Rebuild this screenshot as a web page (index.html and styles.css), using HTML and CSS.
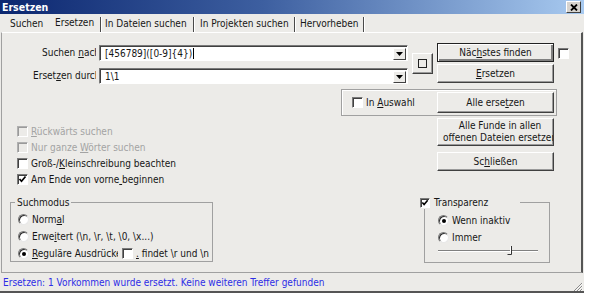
FILE: index.html
```html
<!DOCTYPE html>
<html lang="de">

<head>
    <meta charset="UTF-8">
    <meta name="viewport" content="width=device-width, initial-scale=1.0">
    <title>Ersetzen</title>
    <link rel="stylesheet" href="styles.css">
</head>

<body>
    <div class="window">
        <div class="titlebar">
            <span class="title">Ersetzen</span>
            <span class="close">
                <svg width="8" height="7" viewBox="0 0 8 7"><path d="M1 0.5L7 6.5M7 0.5L1 6.5" stroke="#000" stroke-width="1.8"/></svg>
            </span>
        </div>
        <div class="main">
            <div class="tabs">
                <span class="tab t1">Suchen</span>
                <span class="tab t2 active">Ersetzen</span>
                <span class="tab t3">In Dateien suchen</span>
                <span class="tab t4">In Projekten suchen</span>
                <span class="tab t5">Hervorheben</span>
            </div>
            <div class="pane">
                <!-- suchen / ersetzen felder -->
                <div class="row-a">
                    <div class="fields">
                        <div class="field">
                            <span class="lbl"><span class="clip find">Suchen <u>n</u>ach :</span></span>
                            <div class="combo">
                                <span class="val">[456789]([0-9]{4})</span><span class="caret"></span>
                                <span class="arr"><svg width="7" height="4" viewBox="0 0 7 4"><path d="M0 0H7L3.5 4Z" fill="#000"/></svg></span>
                            </div>
                        </div>
                        <div class="field">
                            <span class="lbl"><span class="clip repl">Erset<u>z</u>en durch :</span></span>
                            <div class="combo">
                                <span class="val">1\1</span>
                                <span class="arr"><svg width="7" height="4" viewBox="0 0 7 4"><path d="M0 0H7L3.5 4Z" fill="#000"/></svg></span>
                            </div>
                        </div>
                    </div>
                    <div class="sqbtn"><span class="sq"></span></div>
                    <div class="btncol">
                        <div class="btn default">Näc<u>h</u>stes finden</div>
                        <div class="btn"><u>E</u>rsetzen</div>
                    </div>
                    <span class="cb cb-top"></span>
                </div>

                <div class="selgroup">
                    <span class="cb"></span>
                    <span class="sel-lbl">In <u>A</u>uswahl</span>
                    <div class="btn">Alle erse<u>t</u>zen</div>
                </div>

                <div class="row-c">
                    <div class="checks">
                        <div class="opt dis"><span class="cb"></span><span><u>R</u>ückwärts suchen</span></div>
                        <div class="opt dis"><span class="cb"></span><span>Nur ganze <u>W</u>örter suchen</span></div>
                        <div class="opt"><span class="cb"></span><span>Groß-/<u>K</u>leinschreibung beachten</span></div>
                        <div class="opt"><span class="cb on"><svg width="9" height="9" viewBox="0 0 9 9"><path d="M1.5 4L3.5 6.3L7.5 1.5" fill="none" stroke="#000" stroke-width="1.7"/></svg></span><span>Am Ende von vorne<u> </u>beginnen</span></div>
                    </div>
                    <div class="btncol wide-gap">
                        <div class="btn tall">Alle Funde in allen<br>offenen Dateien ersetzen</div>
                        <div class="btn">Sc<u>h</u>ließen</div>
                    </div>
                </div>

                <div class="row-d">
                    <fieldset class="mode">
                        <legend>Suchmodus</legend>
                        <div class="opt"><span class="rd"></span><span>Norm<u>a</u>l</span></div>
                        <div class="opt"><span class="rd"></span><span>Erwe<u>i</u>tert (\n, \r, \t, \0, \x...)</span></div>
                        <div class="opt">
                            <span class="rd on"></span><span class="clip regex"><u>R</u>eguläre Ausdrücke</span>
                            <span class="cb"></span><span class="clip dot"><u>.</u> findet \r und \n</span>
                        </div>
                    </fieldset>
                    <fieldset class="transp">
                        <legend><span class="cb on"><svg width="8" height="8" viewBox="0 0 9 9"><path d="M1.5 4L3.5 6.3L7.5 1.5" fill="none" stroke="#000" stroke-width="1.8"/></svg></span><span>Transparenz</span></legend>
                        <div class="opt"><span class="rd on"></span><span>Wenn inaktiv</span></div>
                        <div class="opt"><span class="rd"></span><span>Immer</span></div>
                        <div class="slider">
                            <span class="track"></span>
                            <svg class="thumb" width="6" height="9" viewBox="0 0 6 9"><path d="M4.5 0V8.5H0.5" fill="none" stroke="#333" stroke-width="1"/><path d="M3.5 0.5V7.5" stroke="#fff" stroke-width="1"/></svg>
                        </div>
                    </fieldset>
                </div>
            </div>
            <div class="status">
                <span>Ersetzen: 1 Vorkommen wurde ersetzt. Keine weiteren Treffer gefunden</span>
                <svg class="grip" width="10" height="9" viewBox="0 0 10 9"><path d="M9 1L1 9M9 4L4 9M9 7L7 9" stroke="#8a8a8a" stroke-width="1"/><path d="M10 1L2 9M10 4L5 9M10 7L8 9" stroke="#fff" stroke-width="0.6"/></svg>
            </div>
        </div>
    </div>
</body>

</html>
```

FILE: styles.css
```css
* {
    box-sizing: border-box;
}

body {
    margin: 0;
    background-color: #fff;
    font-family: "DejaVu Sans Condensed", "Liberation Sans", sans-serif;
    font-stretch: condensed;
    font-size: 10px;
    color: #161616;
}

u {
    text-decoration-thickness: 1px;
    text-underline-offset: 1px;
}

.window {
    width: 584px;
}

.titlebar {
    display: flex;
    align-items: center;
    height: 14px;
    padding: 0 3px 0 2px;
    background: linear-gradient(to right, #0c2770, #3d5fa0 45%, #a8caf0);
}

.title {
    color: #fff;
    font-weight: bold;
    font-size: 10.5px;
}

.close {
    display: flex;
    align-items: center;
    justify-content: center;
    margin-left: auto;
    width: 15px;
    height: 12px;
    background-color: #d6d3ce;
    border: 1px solid;
    border-color: #fff #404040 #404040 #fff;
}

.main {
    width: 584px;
    background-color: #ecebe8;
    border-bottom: 2px solid #555;
}

/* reiter */
.tabs {
    display: flex;
    height: 18px;
    padding: 3px 0 0 4px;
}

.tab {
    line-height: 14px;
    border-right: 1px solid #4a4a4a;
    box-shadow: 1px 0 #fff;
    white-space: nowrap;
}

.t1 { width: 46px; padding-left: 6px; border-right: none; box-shadow: none; }
.t2 { width: 51px; padding-left: 5px; line-height: 12px; }
.t3 { width: 92px; padding-left: 3px; margin-left: 1px; }
.t4 { width: 100px; padding-left: 5px; margin-left: 1px; }
.t5 { width: 68px; padding-left: 4px; margin-left: 1px; }

.pane {
    width: 582px;
    height: 241px;
    margin-left: 1px;
    border-left: 1px solid #a0a0a0;
    border-top: 1px solid #fff;
    border-right: 2px solid #555;
    border-bottom: 1px solid #a0a0a0;
}

/* controls */
.btn {
    display: flex;
    align-items: center;
    justify-content: center;
    width: 117px;
    height: 19px;
    text-align: center;
    line-height: 12px;
    border: 1px solid;
    border-color: #fff #404040 #404040 #fff;
    box-shadow: inset -1px -1px #9a9a9a;
    white-space: nowrap;
    overflow: hidden;
}

.btn.default {
    border-color: #222;
    box-shadow: inset 1px 1px #fff, inset -2px -2px #808080;
}

.btn.tall {
    height: 28px;
    justify-content: flex-start;
    padding-left: 5px;
}

.cb {
    display: inline-flex;
    align-items: center;
    justify-content: center;
    flex: none;
    width: 11px;
    height: 11px;
    background-color: #fff;
    border: 1px solid;
    border-color: #7a7a7a #fff #fff #7a7a7a;
    box-shadow: inset 1px 1px #404040;
}

.rd {
    position: relative;
    flex: none;
    width: 11px;
    height: 11px;
    border-radius: 50%;
    background-color: #fff;
    border: 1px solid;
    border-color: #7a7a7a #e8e8e8 #e8e8e8 #7a7a7a;
    box-shadow: inset 1px 1px #303030;
}

.rd.on::after {
    content: "";
    position: absolute;
    left: 3px;
    top: 3px;
    width: 4px;
    height: 4px;
    border-radius: 50%;
    background-color: #000;
}

.opt {
    display: flex;
    align-items: center;
    gap: 3px;
    height: 16px;
    white-space: nowrap;
}

.opt.dis {
    color: #a3a3a3;
}

.opt.dis .cb {
    background-color: #ecebe8;
    border-color: #b0b0b0 #fff #fff #b0b0b0;
    box-shadow: inset 1px 1px #9a9a9a;
}

.clip {
    display: inline-block;
    overflow: hidden;
    white-space: nowrap;
}

/* zeile 1 */
.row-a {
    display: flex;
    align-items: flex-start;
    margin-top: 10px;
}

.fields {
    width: 375px;
    margin: 2px 0 0 31px;
}

.field {
    display: flex;
    align-items: center;
    height: 16px;
}

.field + .field {
    margin-top: 7px;
}

.lbl {
    width: 63px;
    margin-right: 3px;
    text-align: right;
}

.clip.find { width: 54px; }
.clip.repl { width: 63px; text-align: left; }

.combo {
    display: flex;
    align-items: center;
    width: 309px;
    height: 16px;
    padding-left: 5px;
    background-color: #fff;
    border: 1px solid;
    border-color: #7a7a7a #fff #fff #7a7a7a;
    box-shadow: inset 1px 1px #404040;
}

.caret {
    width: 1px;
    height: 11px;
    margin-left: 1px;
    background-color: #000;
}

.arr {
    display: flex;
    align-items: center;
    justify-content: center;
    width: 13px;
    height: 12px;
    margin: 1px 1px 0 auto;
    background-color: #ecebe8;
    border: 1px solid;
    border-color: #fff #404040 #404040 #fff;
}

.sqbtn {
    display: flex;
    align-items: center;
    justify-content: center;
    width: 21px;
    height: 21px;
    margin: 10px 0 0 4px;
    border: 1px solid;
    border-color: #fff #404040 #404040 #fff;
    box-shadow: inset -1px -1px #9a9a9a;
}

.sq {
    width: 9px;
    height: 9px;
    border: 1.5px solid #222;
}

.btncol {
    display: flex;
    flex-direction: column;
    gap: 2px;
    margin-left: 4px;
}

.cb-top {
    margin: 5px 0 0 4px;
}

/* in auswahl */
.selgroup {
    display: flex;
    align-items: center;
    width: 216px;
    height: 27px;
    margin: 5px 0 0 339px;
    padding: 0 2px 0 10px;
    border: 1px solid #a0a0a0;
    box-shadow: inset 1px 1px #fff;
}

.sel-lbl {
    margin-left: 3px;
}

.selgroup .btn {
    height: 21px;
    margin-left: auto;
}

/* optionen */
.row-c {
    display: flex;
    align-items: flex-start;
    margin-top: 2px;
}

.checks {
    width: 420px;
    margin: 5px 0 0 15px;
}

.btncol.wide-gap {
    gap: 6px;
    margin-left: 0;
}

.row-d {
    display: flex;
    align-items: flex-start;
    margin-top: 9px;
}

fieldset {
    margin: 0;
    min-width: 0;
    border: 1px solid #a0a0a0;
}

legend {
    line-height: 13px;
    padding: 0 2px;
}

.mode {
    width: 203px;
    height: 66px;
    margin-left: 8px;
    padding: 2px 0 0 7px;
}

.mode legend {
    margin-left: -3px;
}

.mode .opt {
    height: 17px;
}

.clip.regex { width: 86px; }
.clip.dot { width: 75px; }

.mode .cb {
    margin-left: 1px;
}

.transp {
    width: 126px;
    height: 67px;
    margin-left: 211px;
    padding: 3px 0 0 13px;
}

.transp legend {
    display: flex;
    align-items: center;
    gap: 4px;
    width: 100px;
    margin-left: -18px;
    padding: 0;
}

.transp legend .cb {
    width: 10px;
    height: 10px;
}

.transp .opt {
    height: 17px;
}

.slider {
    position: relative;
    width: 100px;
    height: 9px;
}

.track {
    display: block;
    position: absolute;
    left: 0;
    right: 0;
    top: 4px;
    height: 2px;
    border-top: 1px solid #808080;
    border-bottom: 1px solid #fff;
}

.thumb {
    position: absolute;
    left: 69px;
    top: 0;
}

/* statuszeile */
.status {
    display: flex;
    align-items: center;
    height: 18px;
    padding: 0 1px 0 3px;
    color: #2d2de6;
    white-space: nowrap;
}

.grip {
    align-self: flex-end;
    margin-left: auto;
}
```
